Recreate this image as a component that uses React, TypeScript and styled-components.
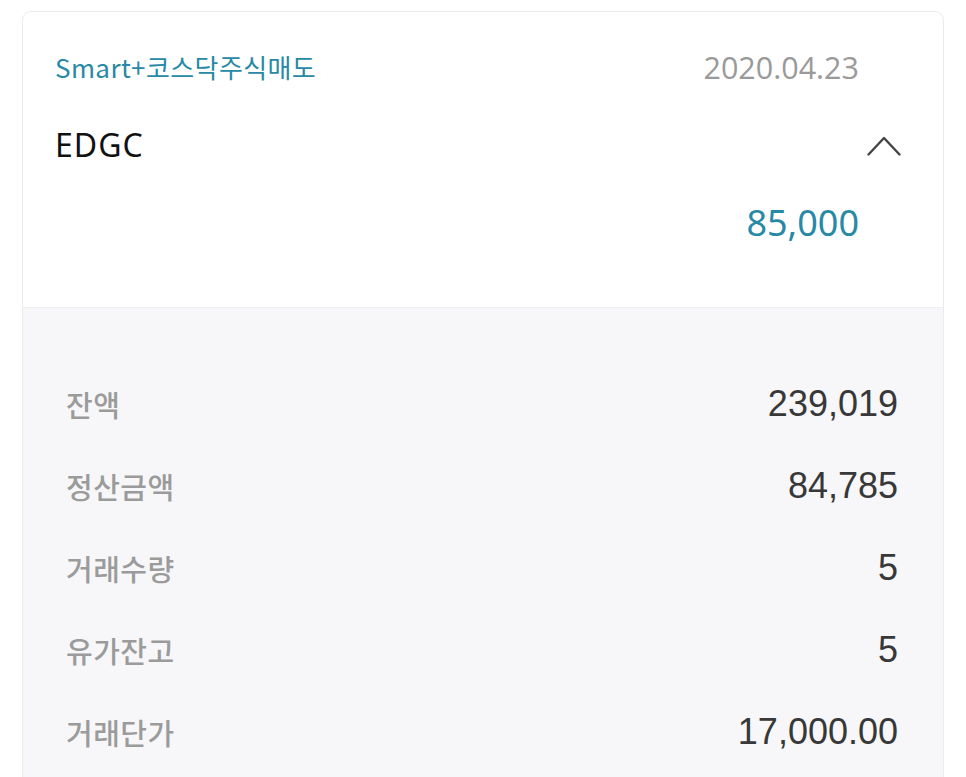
import styled, { createGlobalStyle } from 'styled-components';

const GlobalStyle = createGlobalStyle`
  html, body {
    margin: 0;
    padding: 0;
    background: #ffffff;
  }
  body {
    font-family: "Noto Sans", "Noto Sans CJK KR", sans-serif;
    -webkit-font-smoothing: antialiased;
  }
`;

const teal = '#2889a6';

const Page = styled.div`
  padding: 11px 22px 0 22px;
`;

const CardWrapper = styled.div`
  width: 922px;
  box-sizing: border-box;
  border: 1px solid #ebebeb;
  border-bottom: none;
  border-radius: 9px 9px 0 0;
  overflow: hidden;
  background: #ffffff;
`;

const Header = styled.div`
  display: grid;
  grid-template-columns: 1fr auto 34px;
  grid-template-rows: 40px 40px 40px;
  column-gap: 8px;
  row-gap: 38px;
  align-items: center;
  padding: 35px 42px 64px 32px;
  border-bottom: 1px solid #eeeeee;
`;

const Category = styled.div`
  grid-column: 1;
  grid-row: 1;
  font-family: "Noto Sans CJK KR", "Noto Sans", sans-serif;
  font-size: 26px;
  line-height: 40px;
  color: ${teal};
  letter-spacing: 0.4px;
`;

const DateText = styled.div`
  grid-column: 2;
  grid-row: 1;
  font-family: "Open Sans", "Noto Sans", sans-serif;
  font-size: 30.5px;
  line-height: 40px;
  color: #9a9a9a;
  text-align: right;
`;

const Name = styled.div`
  grid-column: 1 / 3;
  grid-row: 2;
  font-family: "Noto Sans", sans-serif;
  font-size: 32px;
  line-height: 40px;
  color: #111111;
  letter-spacing: 1px;
`;

const Toggle = styled.button`
  grid-column: 3;
  grid-row: 2;
  display: flex;
  align-items: center;
  justify-content: center;
  width: 34px;
  height: 40px;
  padding: 0;
  margin: 0;
  border: none;
  background: none;
  cursor: pointer;
`;

const Amount = styled.div`
  grid-column: 2;
  grid-row: 3;
  font-family: "Noto Sans", sans-serif;
  font-size: 36px;
  line-height: 40px;
  color: ${teal};
  text-align: right;
`;

const Details = styled.div`
  background: #f7f7f9;
  padding: 55px 45px 40px 43px;
`;

const DetailRow = styled.div`
  display: flex;
  align-items: center;
  justify-content: space-between;
  height: 82px;
`;

const Label = styled.span`
  font-family: "Noto Sans CJK KR", sans-serif;
  font-size: 29px;
  font-weight: 500;
  color: #9b9b9b;
  letter-spacing: 0.5px;
`;

const Value = styled.span`
  font-family: "Liberation Sans", Arial, sans-serif;
  font-size: 36px;
  color: #383838;
`;

const ChevronUp = () => (
  <svg width="34" height="22" viewBox="0 0 34 22" fill="none">
    <path d="M1.5 20.5 L17 4 L32.5 20.5" stroke="#444444" strokeWidth="2.4" strokeLinecap="round" strokeLinejoin="round" />
  </svg>
);

const rows = [
  { label: '잔액', value: '239,019' },
  { label: '정산금액', value: '84,785' },
  { label: '거래수량', value: '5' },
  { label: '유가잔고', value: '5' },
  { label: '거래단가', value: '17,000.00' },
];

export default function App() {
  return (
    <>
      <GlobalStyle />
      <Page>
        <CardWrapper>
          <Header>
            <Category>Smart+코스닥주식매도</Category>
            <DateText>2020.04.23</DateText>
            <Name>EDGC</Name>
            <Toggle aria-label="접기">
              <ChevronUp />
            </Toggle>
            <Amount>85,000</Amount>
          </Header>
          <Details>
            {rows.map((row) => (
              <DetailRow key={row.label}>
                <Label>{row.label}</Label>
                <Value>{row.value}</Value>
              </DetailRow>
            ))}
          </Details>
        </CardWrapper>
      </Page>
    </>
  );
}
